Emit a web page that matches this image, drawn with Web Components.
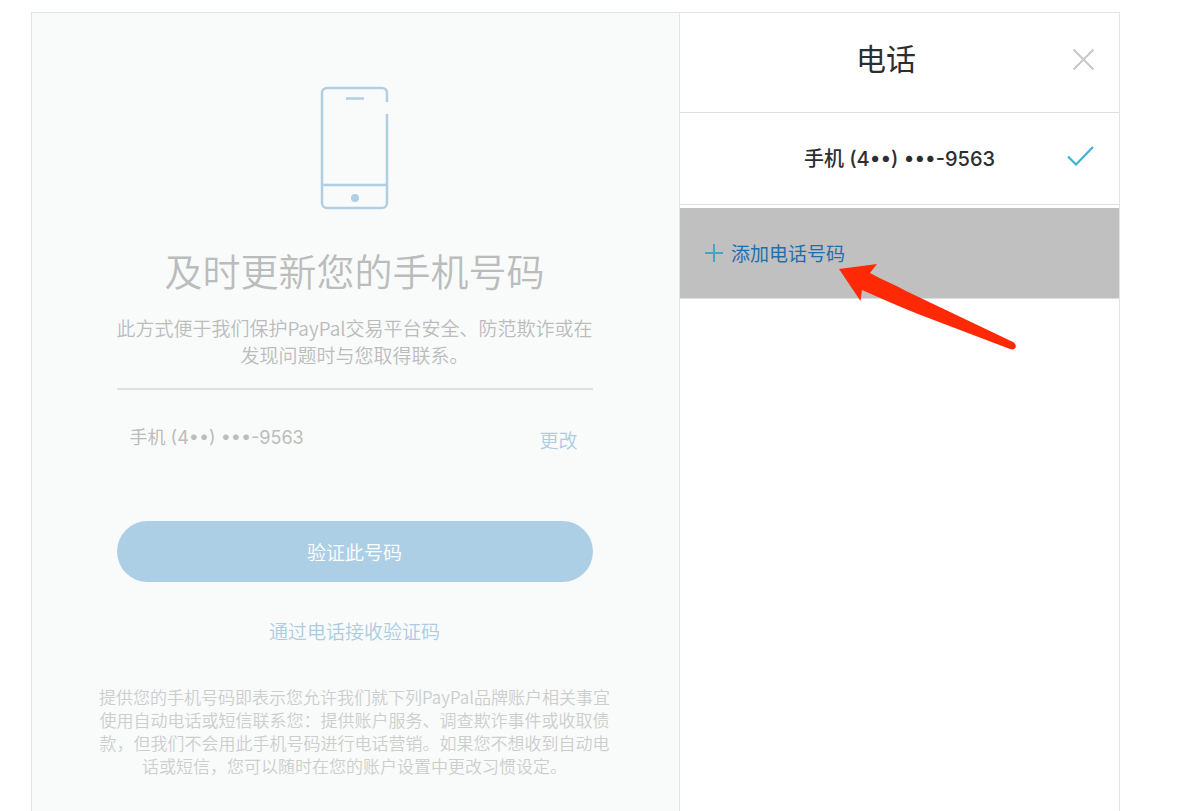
<!DOCTYPE html>
<html lang="zh-CN">
<head>
<meta charset="utf-8">
<meta name="viewport" content="width=device-width, initial-scale=1">
<title>电话</title>
<style>
body {
  margin: 0;
  background: #fff;
  color: #2c2e2f;
  font-family: "Noto Sans CJK SC", "Noto Sans", sans-serif;
}
</style>
</head>
<body>
<phone-settings></phone-settings>

<template id="phone-settings">
  <style>
    :host { display: block; padding: 12px 80px 0 31px; box-sizing: border-box; min-height: 100vh; }
    .card {
      display: grid;
      grid-template-columns: minmax(0, 647fr) minmax(0, 440fr);
      min-height: calc(100vh - 12px);
      box-sizing: border-box;
      border: 1px solid #e2e4e4;
      border-bottom: 0;
    }
  </style>
  <main class="card">
    <verify-panel></verify-panel>
    <phone-drawer></phone-drawer>
  </main>
</template>

<template id="verify-panel">
  <style>
    :host { display: flex; flex-direction: column; align-items: center; background: #f9fbfa; color: #bbbcbc; padding: 73px 42px 24px 40px; font-weight: 350; }
    svg { display: block; }
    h1 { margin: 32px 0 0; font-size: 38px; line-height: 56px; font-weight: 350; text-align: center; }
    .intro { margin: 16px 0 0; font-size: 19px; line-height: 27px; text-align: center; width: 100%; max-width: 480px; }
    .column { width: 100%; max-width: 476px; display: flex; flex-direction: column; }
    hr { width: 100%; margin: 20px 0 0; border: 0; border-top: 2px solid #dfe1e1; }
    .row { display: flex; justify-content: space-between; align-items: flex-end; padding: 0 15px 0 13px; margin-top: 34px; font-size: 19px; line-height: 28px; }
    a { color: #aacde5; text-decoration: none; font-size: 19px; line-height: 28px; }
    .row masked-phone { padding-bottom: 2px; }
    button { margin: 67px 0 0; height: 61px; border: 0; border-radius: 31px; background: #adcfe6; color: #fff; font: inherit; font-size: 19px; }
    .call { margin-top: 35px; align-self: center; }
    small { margin-top: 40px; font-size: 17px; line-height: 23px; text-align: center; color: #cccece; width: 100%; max-width: 512px; }
  </style>
  <svg width="70" height="124" viewBox="0 0 70 124" fill="none" stroke="#b0cfe2" stroke-width="2.5" aria-hidden="true">
    <path d="M67 16V7a5 5 0 0 0-5-5H7a5 5 0 0 0-5 5v110a5 5 0 0 0 5 5h55a5 5 0 0 0 5-5V28M2 99h65M26 12.500h18"/>
    <circle cx="35" cy="112" r="4" fill="#b0cfe2" stroke="none"/>
  </svg>
  <h1>及时更新您的手机号码</h1>
  <p class="intro">此方式便于我们保护PayPal交易平台安全、防范欺诈或在<br>发现问题时与您取得联系。</p>
  <div class="column">
    <hr>
    <div class="row">
      <masked-phone>手机 (4••) •••-9563</masked-phone>
      <a href="#change">更改</a>
    </div>
    <button type="button">验证此号码</button>
    <a class="call" href="#call">通过电话接收验证码</a>
  </div>
  <small>提供您的手机号码即表示您允许我们就下列PayPal品牌账户相关事宜<br>使用自动电话或短信联系您：提供账户服务、调查欺诈事件或收取债<br>款，但我们不会用此手机号码进行电话营销。如果您不想收到自动电<br>话或短信，您可以随时在您的账户设置中更改习惯设定。</small>
</template>

<template id="masked-phone">
  <style>
    :host { display: block; font-family: Inter, "Noto Sans CJK SC", sans-serif; font-size: 18px; line-height: 28px; font-weight: 400; white-space: nowrap; }
    :host([selected]) { font-size: 20px; font-weight: 500; }
  </style>
  <slot></slot>
</template>

<template id="phone-drawer">
  <style>
    :host { display: block; background: #fff; border-left: 1px solid #e2e4e4; }
    header { box-sizing: border-box; display: flex; align-items: flex-start; height: 100px; padding: 23px 24px 0 0; border-bottom: 1px solid #dddfdf; }
    h2 { flex: 1; margin: 0; padding-left: 20px; font-size: 30px; line-height: 42px; font-weight: 400; text-align: center; }
    button { padding: 0; border: 0; background: none; font: inherit; cursor: pointer; }
    .close { display: flex; padding-top: 12px; }
    svg { display: block; }
    .option { box-sizing: border-box; display: grid; grid-template-columns: 1fr auto 1fr; align-items: center; width: 100%; height: 92px; border-bottom: 1px solid #dddfdf; padding: 0 25px; color: #2c2e2f; }
    .option masked-phone { grid-column: 2; }
    .option svg { justify-self: end; margin-bottom: 6px; }
  </style>
  <header>
    <h2>电话</h2>
    <button class="close" type="button" aria-label="关闭">
      <svg width="23" height="23" viewBox="0 0 23 23" fill="none" stroke="#c8c8c8" stroke-width="2"><path d="M1.500 1.500l20 20M21.500 1.500l-20 20"/></svg>
    </button>
  </header>
  <button class="option" type="button" aria-pressed="true">
    <masked-phone selected>手机 (4••) •••-9563</masked-phone>
    <svg width="27" height="20" viewBox="0 0 27 20" fill="none" stroke="#3fb0d8" stroke-width="2.200"><path d="M1 10.500l8 8L26 1"/></svg>
  </button>
  <add-phone>添加电话号码</add-phone>
</template>

<template id="add-phone">
  <style>
    :host { display: block; position: relative; margin-top: 3px; }
    button { display: flex; align-items: center; gap: 8px; width: 100%; height: 91px; border: 0; border-bottom: 1px solid #dddfdf; background: #c0c0c0; color: #1f6ead; padding: 0 25px; font: inherit; font-size: 19px; line-height: 28px; cursor: pointer; }
    .arrow { position: absolute; left: 158px; top: 54px; pointer-events: none; }
  </style>
  <button type="button">
    <svg width="18" height="18" viewBox="0 0 18 18" fill="none" stroke="#3fa6c8" stroke-width="2" aria-hidden="true"><path d="M9 0v18M0 9h18"/></svg>
    <slot></slot>
  </button>
  <svg class="arrow" width="180" height="90" viewBox="0 0 180 90" fill="#ff2a05" aria-hidden="true">
    <path d="M1 7L39 2L32 11C44 18 56 22 68 29L175 80C180 83 178 89 172 87L80 52C60 44 42 36 24 28L22.500 39Z"/>
  </svg>
</template>

<script>
function defineElement(name) {
  customElements.define(name, class extends HTMLElement {
    constructor() {
      super();
      const template = document.getElementById(name);
      this.attachShadow({ mode: "open" }).append(template.content.cloneNode(true));
    }
  });
}
["masked-phone", "add-phone", "verify-panel", "phone-drawer", "phone-settings"].forEach(defineElement);
</script>
</body>
</html>
